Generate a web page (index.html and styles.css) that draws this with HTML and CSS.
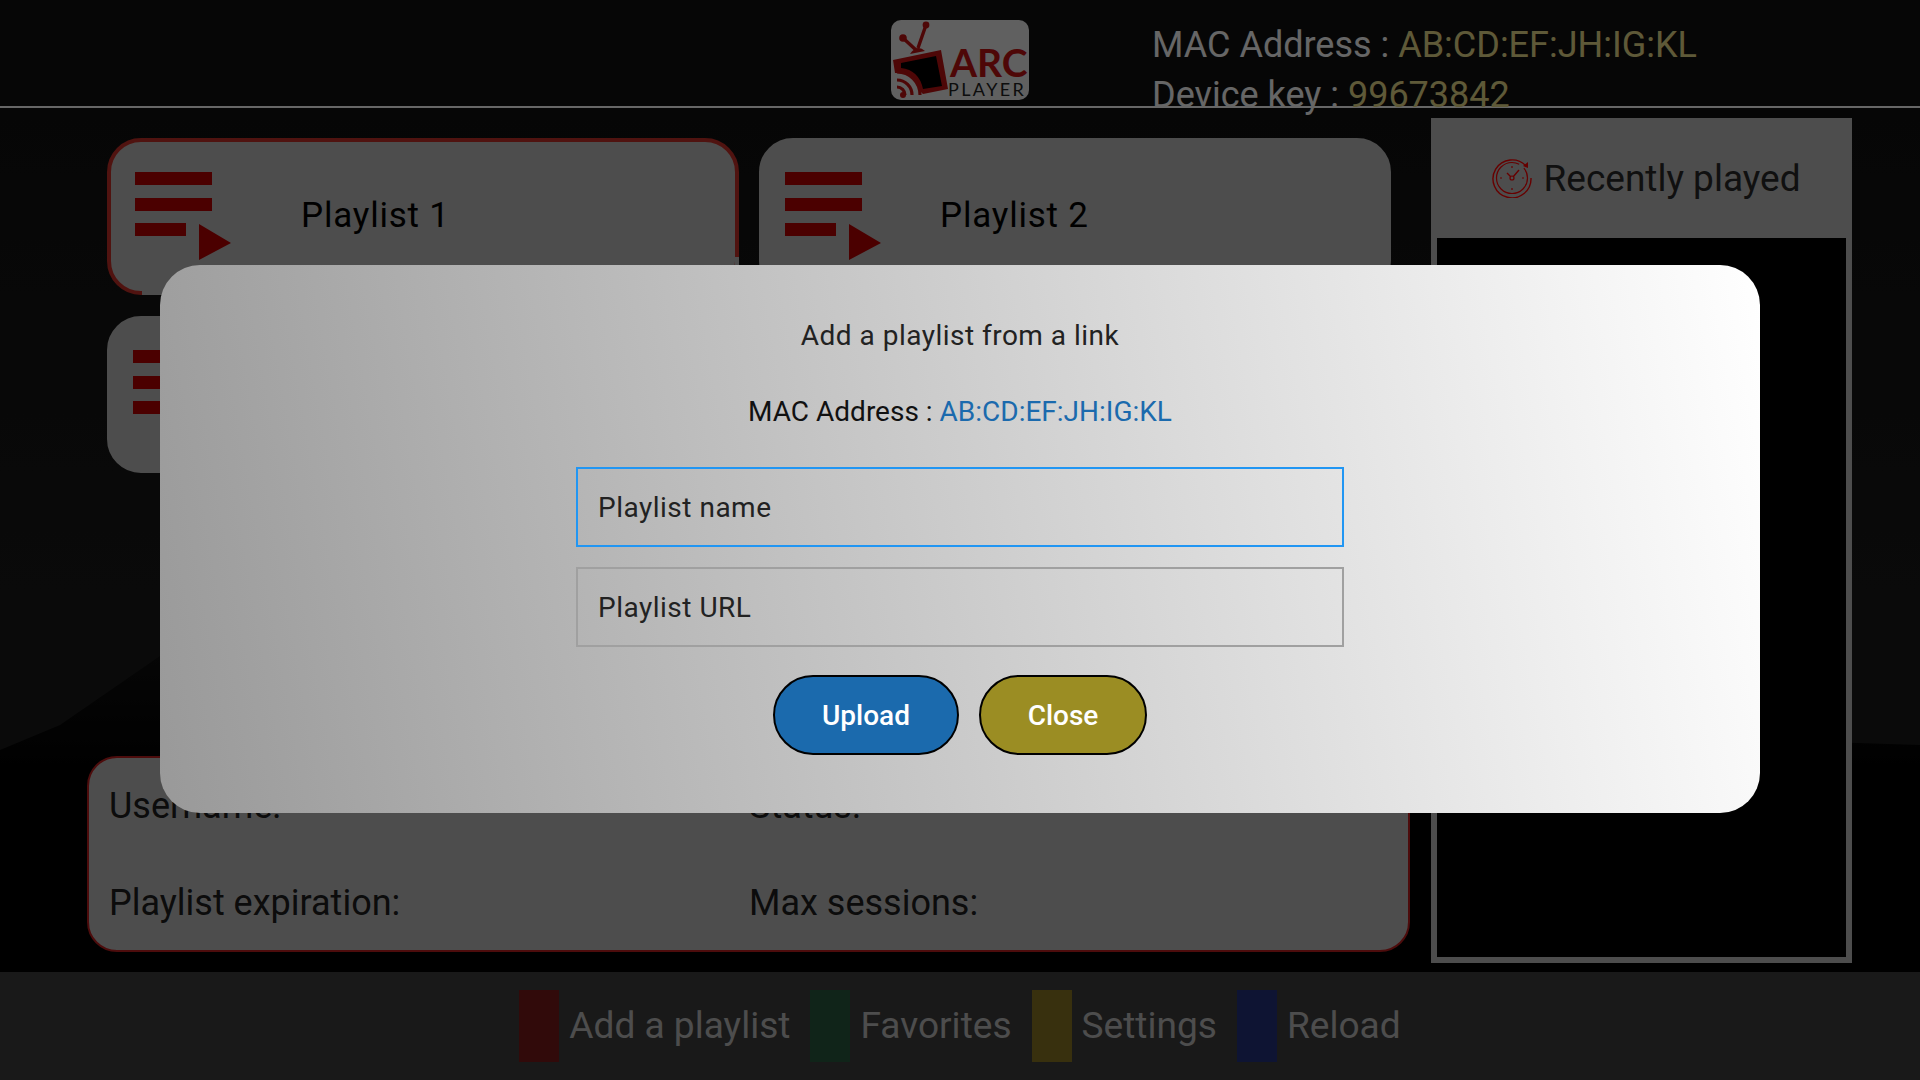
FILE: index.html
```html
<!DOCTYPE html>
<html lang="en">

<head>
  <meta charset="utf-8">
  <title>Arc Player</title>
  <link rel="stylesheet" href="styles.css">
</head>

<body>
  <div class="app">

    <!-- top bar -->
    <header class="topbar">
      <svg class="logo" viewBox="0 0 138 80">
        <rect width="138" height="80" rx="10" fill="#f0f0f0" />
        <path d="M35 5 L27 28 M12 18 L25 30" stroke="#c41212" stroke-width="3.4" fill="none" />
        <circle cx="35" cy="5" r="3.4" fill="#c41212" />
        <circle cx="12" cy="18" r="3.8" fill="#c41212" />
        <path d="M19 34 Q26 24 34 31 Z" fill="#c41212" />
        <path d="M2 40 L50 30 L57 69 L32 74 L29 71 Q27 53 4 53 Z" fill="#c41212" />
        <path d="M10 43 L45 36 L51 66 L32 69 Q28 50 10 48 Z" fill="#000" />
        <g fill="none" stroke="#c41212" stroke-width="3.2">
          <path d="M6 52 A23 23 0 0 1 29 75" />
          <path d="M6 60 A15 15 0 0 1 21 75" />
          <path d="M6 67 A8 8 0 0 1 14 75" />
        </g>
        <circle cx="12" cy="75" r="3" fill="#c41212" />
        <text class="logo-arc" x="59" y="57">ARC</text>
        <text class="logo-player" x="57" y="76">PLAYER</text>
      </svg>
      <div class="device">
        <div>MAC Address : <span class="device-value">AB:CD:EF:JH:IG:KL</span></div>
        <div>Device key : <span class="device-value">99673842</span></div>
      </div>
    </header>

    <main class="main">
      <div class="left">
        <div class="playlists">
          <div class="playlist active">
            <svg class="playlist-icon" viewBox="0 0 96 88">
              <path d="M0 0H77V13H0Z M0 26H77V39H0Z M0 51H51V64H0Z M64 52L96 71L64 88Z" />
            </svg>
            <span class="playlist-name">Playlist 1</span>
          </div>
          <div class="playlist">
            <svg class="playlist-icon" viewBox="0 0 96 88">
              <path d="M0 0H77V13H0Z M0 26H77V39H0Z M0 51H51V64H0Z M64 52L96 71L64 88Z" />
            </svg>
            <span class="playlist-name">Playlist 2</span>
          </div>
          <div class="playlist">
            <svg class="playlist-icon" viewBox="0 0 96 88">
              <path d="M0 0H77V13H0Z M0 26H77V39H0Z M0 51H51V64H0Z M64 52L96 71L64 88Z" />
            </svg>
            <span class="playlist-name">Playlist 3</span>
          </div>
        </div>

        <div class="info">
          <div>Username:</div>
          <div>Status:</div>
          <div>Playlist expiration:</div>
          <div>Max sessions:</div>
        </div>
      </div>

      <aside class="recent">
        <div class="recent-head">
          <svg class="recent-icon" viewBox="0 0 40 40">
            <g fill="none" stroke="#ff0000" stroke-width="1.2">
              <path d="M34 8 A19 19 0 1 0 39 20" stroke-width="1.4" />
              <circle cx="20" cy="20" r="15.5" stroke-dasharray="80 6" />
              <path d="M19 19 L15 15 M21 19 L27 12" stroke-width="1.4" />
              <circle cx="20" cy="20" r="2" />
              <path d="M20 8v2 M20 30v2 M8 20h2 M30 20h2" />
            </g>
            <path d="M36 4 L36 10 L31 8 Z" fill="#ff0000" />
          </svg>
          <span>Recently played</span>
        </div>
        <div class="recent-list"></div>
      </aside>
    </main>

    <footer class="legend">
      <div class="legend-item"><i class="swatch red"></i><span>Add a playlist</span></div>
      <div class="legend-item"><i class="swatch green"></i><span>Favorites</span></div>
      <div class="legend-item"><i class="swatch yellow"></i><span>Settings</span></div>
      <div class="legend-item"><i class="swatch blue"></i><span>Reload</span></div>
    </footer>
  </div>

  <!-- add playlist dialog -->
  <div class="overlay">
    <div class="modal">
      <p class="modal-title">Add a playlist from a link</p>
      <p class="modal-mac">MAC Address : <span class="link">AB:CD:EF:JH:IG:KL</span></p>
      <input class="field selected" type="text" placeholder="Playlist name">
      <input class="field" type="text" placeholder="Playlist URL">
      <div class="buttons">
        <button class="btn upload">Upload</button>
        <button class="btn close">Close</button>
      </div>
    </div>
  </div>
</body>
</html>
```

FILE: styles.css
```css
* {
  box-sizing: border-box;
}
body {
  margin: 0;
  font-family: Roboto, "Liberation Sans", sans-serif;
  background: #000;
}
.app {
  position: relative;
  width: 1920px;
  height: 1080px;
  overflow: hidden;
  display: flex;
  flex-direction: column;
  background: linear-gradient(#0f0f0f, #1a1a1a 60%);
}
/* dark hills of the wallpaper */
.app::before {
  content: "";
  position: absolute;
  inset: 0;
  background: linear-gradient(#101010 650px, #000 780px);
  clip-path: polygon(0 750px, 60px 725px, 160px 656px, 700px 500px, 1300px 600px, 1760px 740px, 1920px 745px, 1920px 1080px, 0 1080px);
}

/* top bar */
.topbar {
  position: relative;
  height: 108px;
  flex: none;
  display: flex;
  align-items: flex-start;
  padding: 20px 0 0 891px;
  border-bottom: 2px solid #fff;
}
.logo {
  width: 138px;
  height: 80px;
  flex: none;
}
.logo-arc {
  font-family: Lato, sans-serif;
  font-weight: 700;
  font-size: 39px;
  fill: #c41212;
}
.logo-player {
  font-family: Lato, sans-serif;
  font-weight: 400;
  font-size: 18px;
  letter-spacing: 2.4px;
  fill: #222;
}
.device {
  margin-left: 123px;
  font-size: 36px;
  line-height: 50px;
  color: #fff;
  white-space: nowrap;
}
.device-value {
  color: #ecdf8c;
}

/* main area */
.main {
  position: relative;
  flex: 1;
  display: flex;
  gap: 21px;
  padding: 10px 68px 0 87px;
}
.left {
  width: 1323px;
  flex: none;
  display: flex;
  flex-direction: column;
  justify-content: space-between;
  padding-bottom: 20px;
}
.playlists {
  display: grid;
  grid-template-columns: 632px 632px;
  grid-auto-rows: 157px;
  gap: 21px 20px;
  padding: 20px 0 0 20px;
}
.playlist {
  position: relative;
  display: flex;
  align-items: flex-start;
  padding: 30px 0 0 22px;
  background: #c0c0c0;
  border-radius: 34px;
  border: 4px solid #c0c0c0;
}
.playlist.active {
  padding-left: 24px;
  border-color: #c83028;
}
/* focus ring is cut short on the right and on the bottom */
.playlist.active::before {
  content: "";
  position: absolute;
  top: 115px;
  right: -4px;
  bottom: -4px;
  width: 4px;
  background: #c0c0c0;
}
.playlist.active::after {
  content: "";
  position: absolute;
  left: 31px;
  right: -4px;
  bottom: -4px;
  height: 4px;
  background: #c0c0c0;
}
.playlist-icon {
  width: 96px;
  height: 88px;
  fill: #bb0000;
  flex: none;
}
.playlist-name {
  margin: 22px 0 0 59px;
  font-size: 35px;
  line-height: 44px;
  letter-spacing: 0.8px;
  color: #000;
}
.playlist.active .playlist-name {
  margin-left: 70px;
}
.info {
  height: 196px;
  display: grid;
  grid-template-columns: 640px 1fr;
  align-content: center;
  gap: 49px 0;
  padding: 0 20px;
  background: #c0c0c0;
  border: 2px solid #c02020;
  border-radius: 30px;
  font-size: 36px;
  line-height: 48px;
  color: #202020;
}

/* recently played */
.recent {
  width: 421px;
  height: 845px;
  flex: none;
  display: flex;
  flex-direction: column;
}
.recent-head {
  height: 120px;
  flex: none;
  display: flex;
  align-items: center;
  justify-content: center;
  gap: 11px;
  padding-left: 10px;
  background: #c0c0c0;
  font-size: 37px;
  color: #2a2a2a;
}
.recent-icon {
  width: 40px;
  height: 40px;
}
.recent-list {
  flex: 1;
  border: 6px solid #c0c0c0;
  border-top: 0;
  background: #000;
}

/* colour key at the bottom */
.legend {
  position: relative;
  height: 108px;
  flex: none;
  display: flex;
  justify-content: center;
  align-items: center;
  gap: 20px;
  background: #3f3f3f;
}
.legend-item {
  display: flex;
  align-items: center;
  gap: 10px;
  font-size: 37.1px;
  line-height: 46px;
  color: #c0c0c0;
}
.swatch {
  display: block;
  width: 40px;
  height: 72px;
}
.red { background: #7a1919; }
.green { background: #285a40; }
.yellow { background: #8c7825; }
.blue { background: #233280; }

/* dialog */
.overlay {
  position: fixed;
  inset: 0;
  display: flex;
  align-items: center;
  justify-content: center;
  padding-bottom: 2px;
  background: rgba(0, 0, 0, 0.6);
}
.modal {
  width: 1600px;
  height: 548px;
  display: flex;
  flex-direction: column;
  align-items: center;
  padding-top: 54px;
  border-radius: 40px;
  background: linear-gradient(80deg, #999, #fff);
  color: #222;
  font-size: 28px;
}
.modal-title,
.modal-mac {
  margin: 0;
  line-height: 34px;
}
.modal-title {
  letter-spacing: 0.48px;
}
.modal-mac {
  margin-top: 42px;
  margin-bottom: 38px;
  color: #111;
}
.link {
  color: #1b6aad;
}
.field {
  width: 768px;
  height: 80px;
  flex: none;
  margin-bottom: 20px;
  padding: 0 20px;
  background: transparent;
  border: 2px solid #a0a0a0;
  border-radius: 0;
  outline: none;
  font-family: Roboto, sans-serif;
  font-size: 28px;
  letter-spacing: 0.5px;
}
.field::placeholder {
  color: #222;
  opacity: 1;
}
.field.selected {
  border-color: #2196f3;
}
.buttons {
  display: flex;
  gap: 20px;
  margin-top: 8px;
}
.btn {
  height: 80px;
  border: 2px solid #000;
  border-radius: 40px;
  font-family: Roboto, sans-serif;
  font-size: 28px;
  font-weight: 500;
  color: #fff;
}
.upload {
  width: 186px;
  background: #1b6aad;
}
.close {
  width: 168px;
  background: #9b8d23;
}
```
